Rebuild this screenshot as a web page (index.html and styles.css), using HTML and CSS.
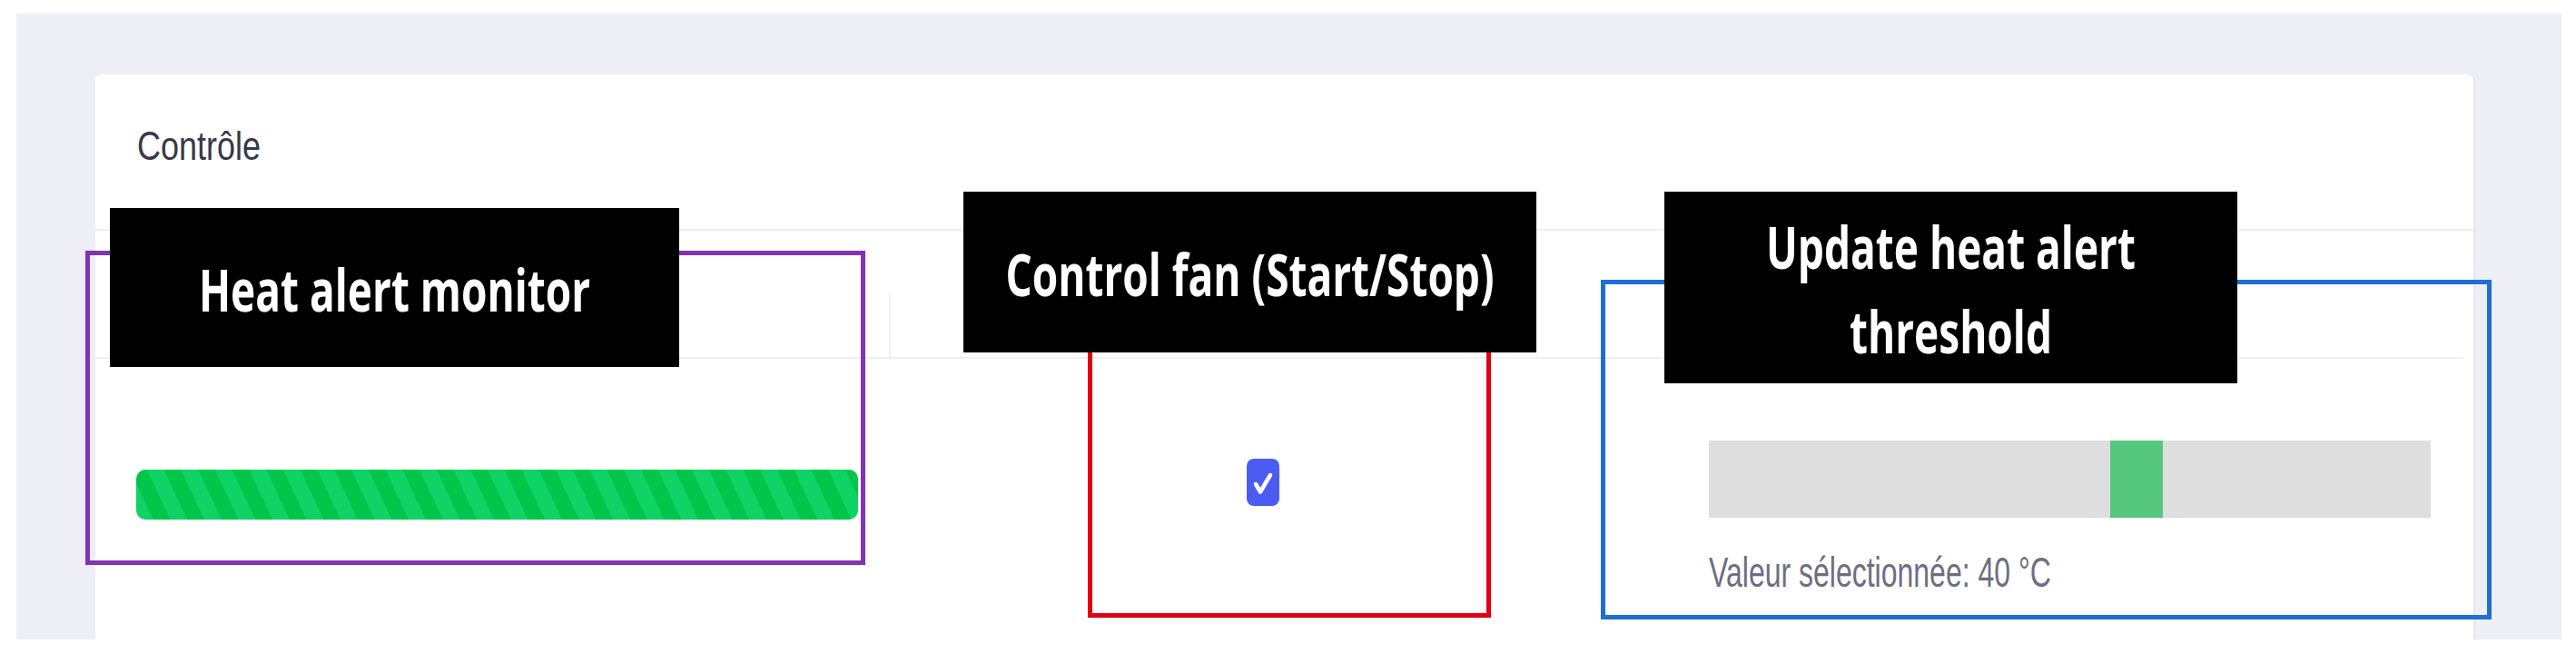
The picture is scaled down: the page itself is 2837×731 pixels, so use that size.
FILE: index.html
```html
<!DOCTYPE html>
<html lang="fr">
	<head>
		<meta charset="UTF-8" />
		<meta name="viewport" content="width=device-width, initial-scale=1.0" />
		<title>Contrôle</title>
		<link rel="stylesheet" href="styles.css">
	</head>
	<body>
		<div class="shot">
			<div class="frame">
				<div class="card">
					<div class="card-header">
						<span class="title">Contrôle</span>
					</div>

					<div class="table">
						<div class="thead">
							<div class="th"></div>
							<div class="th"></div>
							<div class="th"></div>
						</div>
						<div class="tbody">
							<div class="td cell-alert">
								<div class="progress"></div>
							</div>
							<div class="td cell-fan">
								<span class="check" role="checkbox" aria-checked="true">
									<svg width="36" height="52" viewBox="0 0 36 52">
										<polyline points="10,28 15,36.5 26,18" fill="none" stroke="#fff" stroke-width="4.5" stroke-linecap="round" stroke-linejoin="round" />
									</svg>
								</span>
							</div>
							<div class="td cell-threshold">
								<input class="threshold" type="range" min="10" max="60" value="40" />
								<p class="value-text"><span>Valeur sélectionnée: 40 °C</span></p>
							</div>
						</div>
					</div>
				</div>
			</div>

			<!-- annotations -->
			<div class="mark mark-purple"></div>
			<div class="mark mark-red"></div>
			<div class="mark mark-blue"></div>

			<div class="note note-monitor"><span>Heat alert monitor</span></div>
			<div class="note note-fan"><span>Control fan (Start/Stop)</span></div>
			<div class="note note-threshold"><span>Update heat alert<br>threshold</span></div>
		</div>
	</body>
</html>
```

FILE: styles.css
```css
body {
	margin: 0;
	background: #fff;
	font-family: "Liberation Sans", Arial, sans-serif;
}
.shot {
	position: relative;
	width: 2837px;
	height: 731px;
	overflow: hidden;
}
.frame {
	margin: 15px 16px 0 18px;
	height: 689px;
	padding: 67px 97px 0 87px;
	box-sizing: border-box;
	background: #eeeef6;
	overflow: hidden;
}
.card {
	background: #fff;
	border-radius: 6px 6px 0 0;
	height: 700px;
	box-shadow: 2px 0 0 #e6e6ee;
}
.card-header {
	padding: 59px 0 71px 46px;
	border-bottom: 2px solid #efeff3;
}
.title {
	display: inline-block;
	font-size: 36px;
	line-height: 40px;
	color: #383848;
	transform: scaleY(1.25);
}
.table {
	margin-right: 11px;
}
.thead,
.tbody {
	display: grid;
	grid-template-columns: 874px 824px 1fr;
}
.thead {
	height: 139px;
	border-bottom: 2px solid #efeff3;
}
.th:nth-child(2) {
	margin-top: 69px;
	border-left: 2px solid #f0f0f3;
}
.cell-alert {
	padding: 122px 0 0 45px;
}
.progress {
	width: 795px;
	height: 55px;
	border-radius: 10px;
	background: repeating-linear-gradient(65deg, #10d366 0 17px, #01c64a 17px 34px);
}
.cell-fan {
	display: flex;
	justify-content: center;
	padding-top: 110px;
}
.check {
	display: block;
	width: 36px;
	height: 52px;
	border-radius: 8px;
	background: #4b5cf2;
}
.check svg {
	display: block;
}
.cell-threshold {
	padding: 90px 0 0 79px;
}
.threshold {
	-webkit-appearance: none;
	appearance: none;
	display: block;
	width: 795px;
	height: 85px;
	margin: 0;
	background: #dedede;
	outline: none;
}
.threshold::-webkit-slider-runnable-track {
	height: 85px;
	background: #dedede;
}
.threshold::-webkit-slider-thumb {
	-webkit-appearance: none;
	appearance: none;
	width: 58px;
	height: 85px;
	border: none;
	background: #55c77f;
}
.value-text {
	margin: 42px 0 0;
	font-size: 32px;
	line-height: 36px;
	color: #6e6e80;
}
.value-text span {
	display: inline-block;
	transform: scaleY(1.45);
}

/* annotation boxes and labels */
.mark {
	position: absolute;
	border: 5px solid;
	box-sizing: border-box;
}
.mark-purple {
	left: 94px;
	top: 276px;
	width: 859px;
	height: 346px;
	border-color: #8233b3;
}
.mark-red {
	left: 1198px;
	top: 380px;
	width: 444px;
	height: 300px;
	border-color: #e10012;
}
.mark-blue {
	left: 1763px;
	top: 308px;
	width: 981px;
	height: 374px;
	border-color: #1e6fd2;
}
.note {
	position: absolute;
	display: flex;
	align-items: center;
	justify-content: center;
	text-align: center;
	background: #000;
	color: #fff;
	font-family: "Open Sans", "Liberation Sans", sans-serif;
	font-weight: 700;
	font-size: 46px;
	line-height: 66px;
}
.note span {
	display: inline-block;
	transform: scaleY(1.42);
}
.note-monitor {
	left: 121px;
	top: 229px;
	width: 627px;
	height: 175px;
}
.note-fan {
	left: 1061px;
	top: 211px;
	width: 631px;
	height: 177px;
}
.note-threshold {
	left: 1833px;
	top: 211px;
	width: 631px;
	height: 211px;
}
```
